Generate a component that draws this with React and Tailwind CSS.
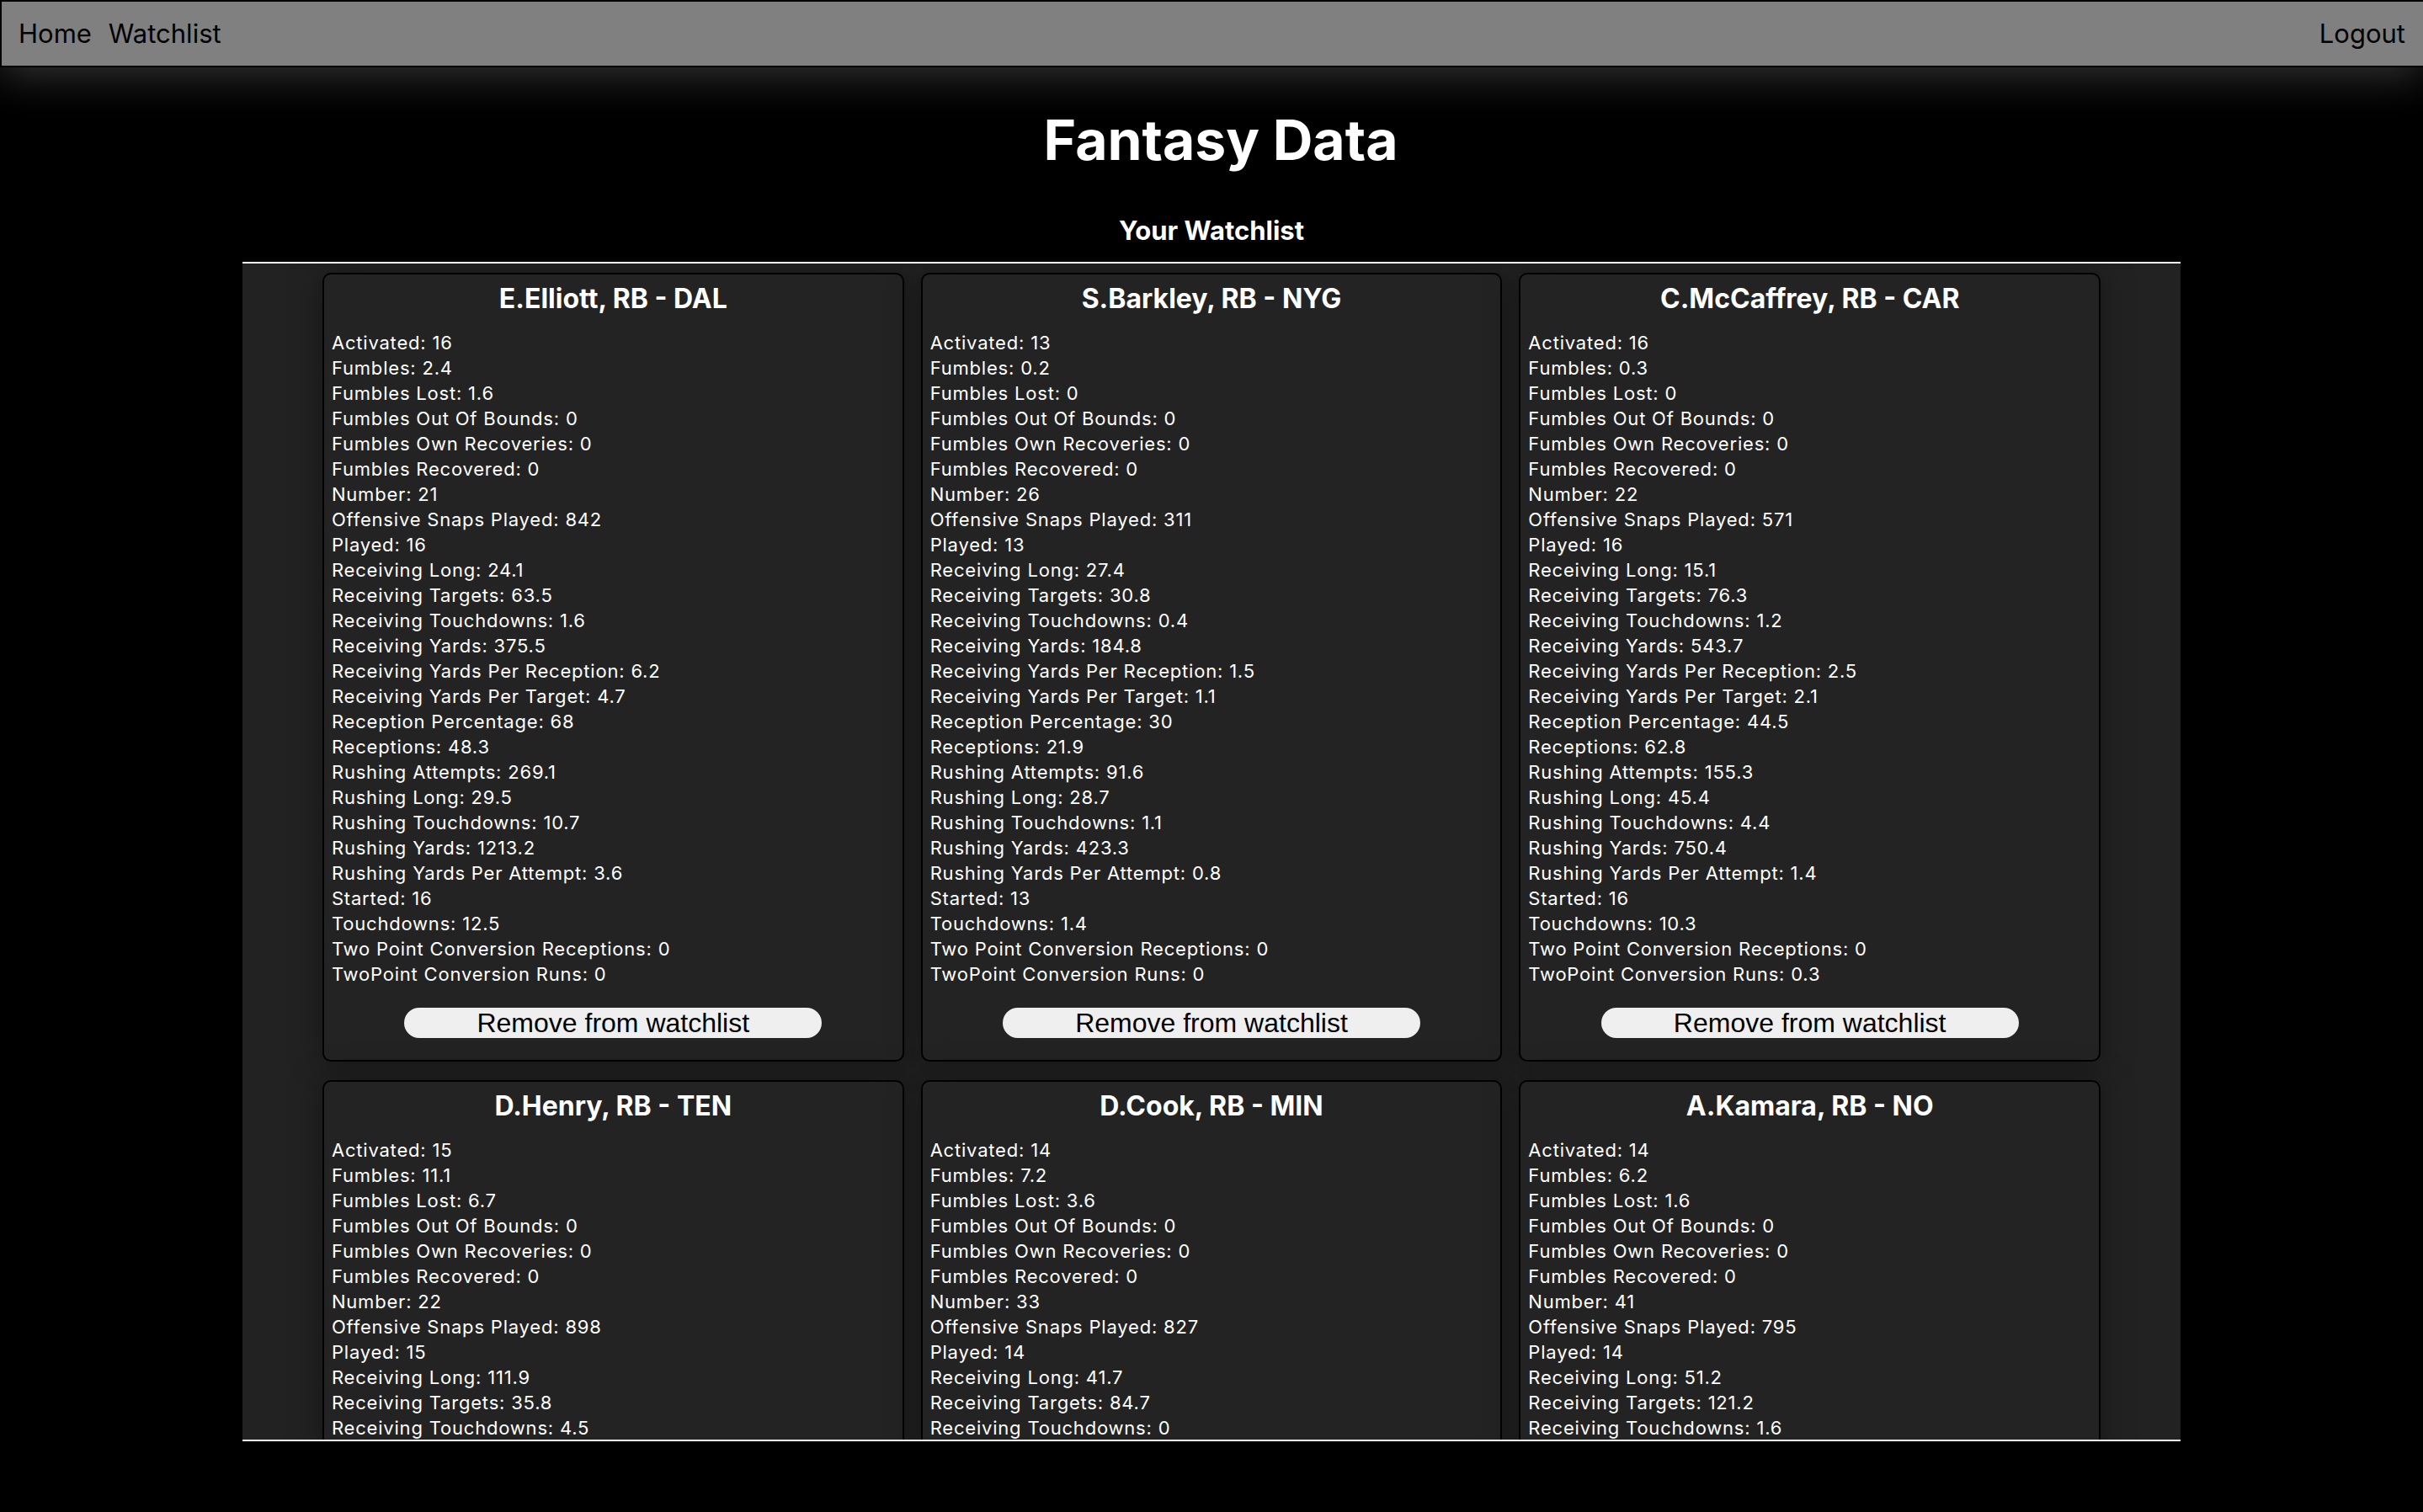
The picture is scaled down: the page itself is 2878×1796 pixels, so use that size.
// App.jsx - fantasy data watchlist
const labels = [
  "Activated",
  "Fumbles",
  "Fumbles Lost",
  "Fumbles Out Of Bounds",
  "Fumbles Own Recoveries",
  "Fumbles Recovered",
  "Number",
  "Offensive Snaps Played",
  "Played",
  "Receiving Long",
  "Receiving Targets",
  "Receiving Touchdowns",
  "Receiving Yards",
  "Receiving Yards Per Reception",
  "Receiving Yards Per Target",
  "Reception Percentage",
  "Receptions",
  "Rushing Attempts",
  "Rushing Long",
  "Rushing Touchdowns",
  "Rushing Yards",
  "Rushing Yards Per Attempt",
  "Started",
  "Touchdowns",
  "Two Point Conversion Receptions",
  "TwoPoint Conversion Runs",
];

const players = [
  {
    name: "E.Elliott, RB - DAL",
    values: [16, 2.4, 1.6, 0, 0, 0, 21, 842, 16, 24.1, 63.5, 1.6, 375.5, 6.2, 4.7, 68, 48.3, 269.1, 29.5, 10.7, 1213.2, 3.6, 16, 12.5, 0, 0],
  },
  {
    name: "S.Barkley, RB - NYG",
    values: [13, 0.2, 0, 0, 0, 0, 26, 311, 13, 27.4, 30.8, 0.4, 184.8, 1.5, 1.1, 30, 21.9, 91.6, 28.7, 1.1, 423.3, 0.8, 13, 1.4, 0, 0],
  },
  {
    name: "C.McCaffrey, RB - CAR",
    values: [16, 0.3, 0, 0, 0, 0, 22, 571, 16, 15.1, 76.3, 1.2, 543.7, 2.5, 2.1, 44.5, 62.8, 155.3, 45.4, 4.4, 750.4, 1.4, 16, 10.3, 0, 0.3],
  },
  // only the rows that show above the fold
  {
    name: "D.Henry, RB - TEN",
    values: [15, 11.1, 6.7, 0, 0, 0, 22, 898, 15, 111.9, 35.8, 4.5],
  },
  {
    name: "D.Cook, RB - MIN",
    values: [14, 7.2, 3.6, 0, 0, 0, 33, 827, 14, 41.7, 84.7, 0],
  },
  {
    name: "A.Kamara, RB - NO",
    values: [14, 6.2, 1.6, 0, 0, 0, 41, 795, 14, 51.2, 121.2, 1.6],
  },
];

function Navbar() {
  return (
    <nav className="h-[80px] flex items-center justify-between bg-[#808080] border-2 border-r-0 border-black pl-[20px] pr-[21px] text-[31px] text-black shadow-[0_10px_50px_rgba(255,255,255,0.2)] relative z-10">
      <div className="flex gap-[20px]">
        <a href="#">Home</a>
        <a href="#">Watchlist</a>
      </div>
      <a href="#">Logout</a>
    </nav>
  );
}

function PlayerCard({ player }) {
  const complete = player.values.length === labels.length;
  return (
    <div className="w-[30%] mx-[10px] mt-[10px] mb-[12px] bg-[#232323] border-2 border-black rounded-[10px] shadow-[0_0_40px_rgba(0,0,0,0.35)] pt-[9px] pb-[26px] px-[9px] text-white">
      <h3 className="text-center text-[32px] leading-[40px] font-bold">{player.name}</h3>
      <ul className="mt-[17px] text-[22px] leading-[30px] tracking-[0.8px]">
        {player.values.map((v, i) => (
          <li key={labels[i]}>
            {labels[i]}: {v}
          </li>
        ))}
      </ul>
      {complete && (
        <div className="flex justify-center mt-[25px]">
          <button className="w-[496px] h-[36px] rounded-full bg-[#efefef] text-black text-[32px] leading-none font-['Liberation_Sans',Arial,sans-serif]">
            Remove from watchlist
          </button>
        </div>
      )}
    </div>
  );
}

export default function App() {
  return (
    <div className="min-h-screen bg-black font-['Inter','Noto_Sans',sans-serif] text-white">
      <Navbar />
      <h1 className="mt-[46px] pl-[22px] text-center text-[66px] leading-[80px] font-bold">Fantasy Data</h1>
      <h2 className="mt-[48px] text-center text-[31px] leading-[40px] font-bold">Your Watchlist</h2>
      <section className="mt-[17px] w-[80%] mx-auto h-[1401px] border-y-2 border-white bg-[#222222] overflow-hidden">
        <div className="flex flex-wrap justify-center pt-px">
          {players.map((p) => (
            <PlayerCard key={p.name} player={p} />
          ))}
        </div>
      </section>
    </div>
  );
}
